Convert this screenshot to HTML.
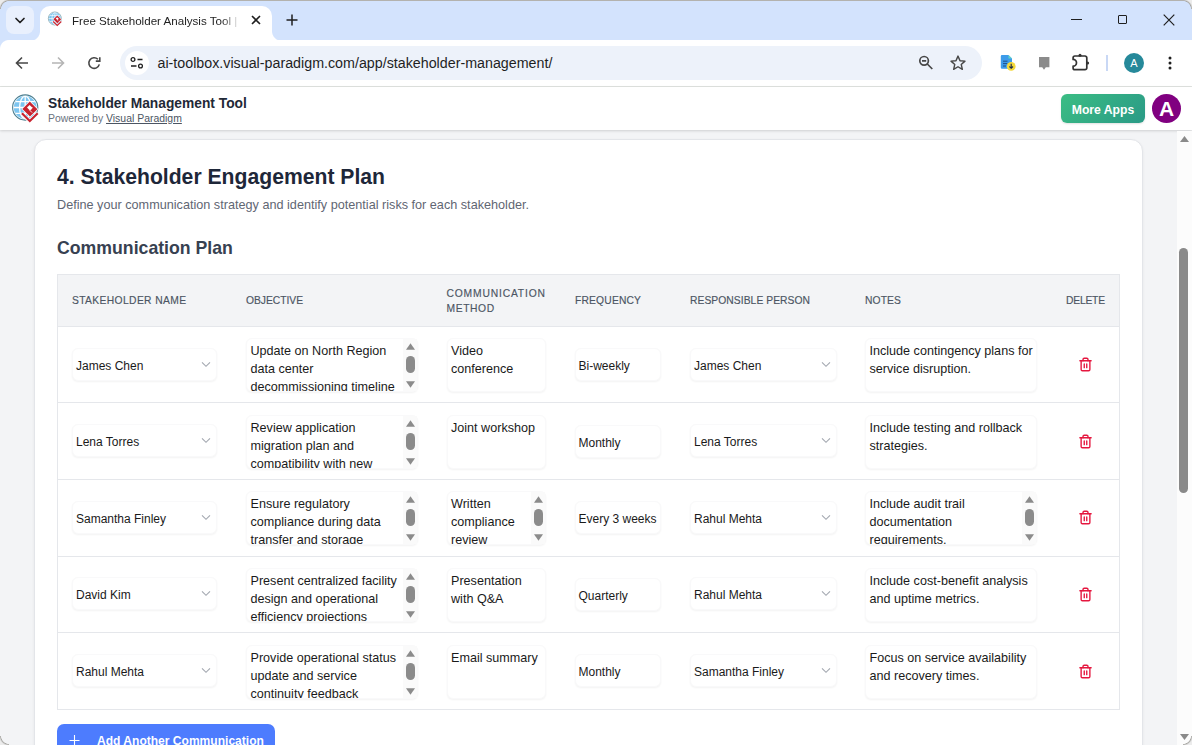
<!DOCTYPE html>
<html><head><meta charset="utf-8"><title>Stakeholder Management Tool</title><style>
*{margin:0;padding:0;box-sizing:border-box}
html,body{width:1192px;height:745px;overflow:hidden;background:#fff}
body{position:relative;font-family:"Liberation Sans",sans-serif}
.abs,.t,.box,.clip{position:absolute}
.t{white-space:nowrap}
.clip{overflow:hidden}
#tabstrip{position:absolute;left:0;top:0;width:1192px;height:40px;background:#d3e3fd;border-top-left-radius:8px;border-top-right-radius:8px}
#winline{position:absolute;left:0;top:0;width:1192px;height:1px;background:#b3b2ae}
#tabdd{position:absolute;left:6px;top:6px;width:28px;height:28px;border-radius:8px;background:#e9f0fd}
#tab{position:absolute;left:40px;top:6px;width:232px;height:35px;background:#fff;border-radius:10px 10px 0 0}
.flare{position:absolute;bottom:0;width:10px;height:10px}
.fl{left:-10px;background:radial-gradient(circle at 0 0,transparent 9.5px,#fff 10.5px)}
.fr{right:-10px;background:radial-gradient(circle at 100% 0,transparent 9.5px,#fff 10.5px)}
#toolbar{position:absolute;left:0;top:40px;width:1192px;height:46px;background:#fff}
#omni{position:absolute;left:120px;top:46px;width:862px;height:34px;border-radius:17px;background:#edf2fa}
#pagebg{position:absolute;left:0;top:87px;width:1192px;height:658px;background:#f3f4f6}
#page > *{}
#appbar{position:absolute;left:0;top:87px;width:1192px;height:43px;background:#fff;box-shadow:0 1px 3px rgba(0,0,0,.10),0 1px 2px rgba(0,0,0,.06)}
#moreapps{position:absolute;left:1061px;top:94px;width:84px;height:29px;border-radius:6px;background:linear-gradient(135deg,#3bbd84,#2a9a86);color:#fff;font-weight:700;font-size:12.2px;line-height:29px;padding-top:2px;text-align:center;box-shadow:0 1px 2px rgba(0,0,0,.12)}
#avatar{position:absolute;left:1152px;top:94px;width:29px;height:29px;border-radius:50%;background:#800080;color:#fff;font-weight:700;font-size:21px;line-height:30px;text-align:center}
#vscroll{position:absolute;left:1177px;top:131px;width:15px;height:614px;background:#fcfcfc}
#vthumb{position:absolute;left:2px;top:117px;width:9px;height:245px;border-radius:4.5px;background:#8a8a8a}
#card{position:absolute;left:34px;top:139px;width:1109px;height:700px;background:#fff;border:1px solid #e3e5e9;border-radius:12px;box-shadow:0 1px 3px rgba(0,0,0,.06)}
#table{position:absolute;left:57px;top:274px;width:1063px;height:436px;border:1px solid #e5e7eb;background:#fff}
#thead{position:absolute;left:58px;top:275px;width:1061px;height:52px;background:#f3f4f6;border-bottom:1px solid #e5e7eb}
.box{border:1px solid #f9f9fa;border-radius:6px;background:#fff;box-shadow:0 1px 2px rgba(0,0,0,.05)}
#addbtn{position:absolute;left:57px;top:724px;width:218px;height:40px;border-radius:7px;background:#4d7cfe}
</style></head><body>
<div id="tabstrip"></div>
<div id="winline"></div>
<div id="tabdd"><svg width="28" height="28" viewBox="0 0 28 28"><path d="M10 12.5l4 4 4-4" fill="none" stroke="#1f1f1f" stroke-width="1.7" stroke-linecap="round" stroke-linejoin="round"/></svg></div>
<div id="tab"><div class="flare fl"></div><div class="flare fr"></div></div>
<svg class="abs" style="left:47px;top:11px" width="15.5" height="15.5" viewBox="0 0 30 30"><defs><clipPath id="gc1"><circle cx="15.2" cy="14.5" r="11.4"/></clipPath></defs>
<circle cx="15.2" cy="14.5" r="12.6" fill="#fff" stroke="#4d7f90" stroke-width="1.1"/>
<g clip-path="url(#gc1)"><rect x="0" y="0" width="30" height="30" fill="#7cc5f0"/>
<path d="M0 14.5h30M0 8.6h30M0 20.4h30M15.2 0v30" stroke="#fff" stroke-width="1.3"/>
<ellipse cx="15.2" cy="14.5" rx="5.6" ry="11.4" fill="none" stroke="#fff" stroke-width="1.3"/></g>
<path d="M11.6 20.3l8.2 8 8.1-8" fill="none" stroke="#fff" stroke-width="3.6"/>
<path d="M11.9 20.3l7.9 7.7 7.9-7.7" fill="none" stroke="#c8232f" stroke-width="2.2"/>
<path d="M19.8 7.6l8.6 8.6-8.4 8.4-8.6-8.6z" fill="#fff"/>
<path d="M19.8 8.6l7.6 7.6-7.4 7.4-7.6-7.6z" fill="#c8232f"/>
<path d="M19.6 11.9l2.9 2.9-2.6 2.6-2.9-2.9z" fill="#fff"/>
<path d="M22.5 14.8l-2.6 2.6 2.2 2.2" fill="none" stroke="#fff" stroke-width="0.9"/></svg>
<div class="t " style="left:72.00px;top:14.23px;font-size:11.6px;line-height:14.5px;color:#1f1f1f;font-weight:400;width:172px;overflow:hidden;white-space:nowrap;-webkit-mask-image:linear-gradient(90deg,#000 150px,transparent 168px);">Free Stakeholder Analysis Tool | Visual Paradigm</div>
<svg class="abs" style="left:250.4px;top:14px" width="12" height="12" viewBox="0 0 12 12"><path d="M2 2l8 8M10 2l-8 8" stroke="#1f1f1f" stroke-width="1.6"/></svg>
<svg class="abs" style="left:285px;top:13px" width="14" height="14" viewBox="0 0 14 14"><path d="M7 1.5v11M1.5 7h11" stroke="#1f1f1f" stroke-width="1.5"/></svg>
<div class="abs" style="left:1071px;top:19px;width:11px;height:1px;background:#1f1f1f"></div>
<div class="abs" style="left:1117.5px;top:15px;width:9px;height:9px;border:1.2px solid #1f1f1f;border-radius:1px"></div>
<svg class="abs" style="left:1163px;top:14px" width="12" height="12" viewBox="0 0 12 12"><path d="M0.7 0.7l10.6 10.6M11.3 0.7L0.7 11.3" stroke="#1f1f1f" stroke-width="1.2"/></svg>
<div id="toolbar"></div>
<div class="abs" style="left:0;top:40px;width:9px;height:9px;background:radial-gradient(circle at 100% 100%,transparent 8.5px,#d3e3fd 9.5px)"></div>
<svg class="abs" style="left:14px;top:55px" width="16" height="16" viewBox="0 0 16 16"><path d="M14 8H3M8 2.5L2.5 8 8 13.5" fill="none" stroke="#474747" stroke-width="1.6"/></svg>
<svg class="abs" style="left:50px;top:55px" width="16" height="16" viewBox="0 0 16 16"><path d="M2 8h11M8 2.5L13.5 8 8 13.5" fill="none" stroke="#b5b5b5" stroke-width="1.6"/></svg>
<svg class="abs" style="left:86px;top:55px" width="16" height="16" viewBox="0 0 16 16"><path d="M11.9 4.3A5.3 5.3 0 1 0 13.3 9.4" fill="none" stroke="#474747" stroke-width="1.6"/><path d="M13.8 2.3V6.1H9.8" fill="none" stroke="#474747" stroke-width="1.6"/></svg>
<div id="omni"></div>
<div class="abs" style="left:125px;top:51px;width:24px;height:24px;border-radius:12px;background:#fff"></div>
<svg class="abs" style="left:129px;top:55px" width="16" height="16" viewBox="0 0 16 16"><circle cx="4" cy="4.5" r="1.9" fill="none" stroke="#1f1f1f" stroke-width="1.3"/><path d="M8.5 4.5h5M2 11h5.5" stroke="#1f1f1f" stroke-width="1.3"/><circle cx="11.5" cy="11" r="1.9" fill="none" stroke="#1f1f1f" stroke-width="1.3"/></svg>
<div class="t " style="left:157.50px;top:54.74px;font-size:14.27px;line-height:17.84px;color:#1f1f1f;font-weight:400;white-space:nowrap;">ai-toolbox.visual-paradigm.com/app/stakeholder-management/</div>
<svg class="abs" style="left:917px;top:55px" width="18" height="18" viewBox="0 0 18 18"><circle cx="7.1" cy="5.8" r="4.3" fill="none" stroke="#474747" stroke-width="1.7"/><path d="M5 5.8h4.2M10.3 9l5 5" stroke="#474747" stroke-width="1.7"/></svg>
<svg class="abs" style="left:949px;top:54px" width="18" height="18" viewBox="0 0 24 24"><path d="M12 2.8l2.7 6.1 6.6.6-5 4.4 1.5 6.5L12 17l-5.8 3.4 1.5-6.5-5-4.4 6.6-.6z" fill="none" stroke="#474747" stroke-width="1.9" stroke-linejoin="round"/></svg>
<svg class="abs" style="left:998px;top:53px" width="20" height="20" viewBox="0 0 20 20"><path d="M4 2h6.5l3.5 3.5V14.5a1.2 1.2 0 0 1-1.2 1.2H4a1.2 1.2 0 0 1-1.2-1.2V3.2A1.2 1.2 0 0 1 4 2z" fill="#3d9be9"/><path d="M10.5 2v3.5H14z" fill="#5fd6c8"/><path d="M5 8.2h4.5M5 10.6h4.5M5 13h3" stroke="#1d4f8a" stroke-width="1"/><circle cx="13.2" cy="13.4" r="4.4" fill="#f4d83a"/><path d="M13.2 10.8v4.4M11.4 13.5l1.8 1.8 1.8-1.8" fill="none" stroke="#1d2b4a" stroke-width="1.1"/></svg>
<svg class="abs" style="left:1036px;top:55px" width="16" height="16" viewBox="0 0 16 16"><path d="M3 2h10.4v10.2H9.8L8 14.7 6.2 12.2H3z" fill="#8b8b8b"/></svg>
<svg class="abs" style="left:1071px;top:52px" width="20" height="20" viewBox="0 0 20 20"><path d="M3.9 4H14a1.8 1.8 0 0 1 1.8 1.8V15.9a1.8 1.8 0 0 1-1.8 1.8H3.9a1.8 1.8 0 0 1-1.8-1.8V14.2A3.4 3.4 0 0 0 2.1 7.4V5.8A1.8 1.8 0 0 1 3.9 4z" fill="none" stroke="#333" stroke-width="1.7" stroke-linejoin="round"/><circle cx="9" cy="3.3" r="1.5" fill="#333"/><circle cx="16.6" cy="11" r="1.5" fill="#333"/></svg>
<div class="abs" style="left:1106px;top:55px;width:2px;height:16px;background:#c9d8f5"></div>
<div class="abs" style="left:1124px;top:53px;width:20px;height:20px;border-radius:10px;background:#26899a;color:#fff;font-size:11px;line-height:20px;text-align:center;font-family:'Liberation Sans',sans-serif">A</div>
<svg class="abs" style="left:1162px;top:55px" width="16" height="16" viewBox="0 0 16 16"><circle cx="8" cy="3" r="1.5" fill="#1f1f1f"/><circle cx="8" cy="8" r="1.5" fill="#1f1f1f"/><circle cx="8" cy="13" r="1.5" fill="#1f1f1f"/></svg>
<div class="abs" style="left:0;top:86px;width:1192px;height:1px;background:#e0e3e0"></div>
<div id="pagebg"></div><div>
<div id="appbar"></div>
<svg class="abs" style="left:10px;top:93px" width="30" height="30" viewBox="0 0 30 30"><defs><clipPath id="gc2"><circle cx="15.2" cy="14.5" r="11.4"/></clipPath></defs>
<circle cx="15.2" cy="14.5" r="12.6" fill="#fff" stroke="#4d7f90" stroke-width="1.1"/>
<g clip-path="url(#gc2)"><rect x="0" y="0" width="30" height="30" fill="#7cc5f0"/>
<path d="M0 14.5h30M0 8.6h30M0 20.4h30M15.2 0v30" stroke="#fff" stroke-width="1.3"/>
<ellipse cx="15.2" cy="14.5" rx="5.6" ry="11.4" fill="none" stroke="#fff" stroke-width="1.3"/></g>
<path d="M11.6 20.3l8.2 8 8.1-8" fill="none" stroke="#fff" stroke-width="3.6"/>
<path d="M11.9 20.3l7.9 7.7 7.9-7.7" fill="none" stroke="#c8232f" stroke-width="2.2"/>
<path d="M19.8 7.6l8.6 8.6-8.4 8.4-8.6-8.6z" fill="#fff"/>
<path d="M19.8 8.6l7.6 7.6-7.4 7.4-7.6-7.6z" fill="#c8232f"/>
<path d="M19.6 11.9l2.9 2.9-2.6 2.6-2.9-2.9z" fill="#fff"/>
<path d="M22.5 14.8l-2.6 2.6 2.2 2.2" fill="none" stroke="#fff" stroke-width="0.9"/></svg>
<div class="t " style="left:48.00px;top:95.20px;font-size:13.79px;line-height:17.24px;color:#1f2937;font-weight:700;white-space:nowrap;">Stakeholder Management Tool</div>
<div class="t " style="left:48.00px;top:111.65px;font-size:10.45px;line-height:13.06px;color:#6b7280;font-weight:400;white-space:nowrap;">Powered by <span style="text-decoration:underline;color:#4b5563">Visual Paradigm</span></div>
<div id="moreapps">More Apps</div>
<div id="avatar">A</div>
<div id="vscroll"><div id="vthumb"></div></div>
<svg class="abs" style="left:1179px;top:135px" width="11" height="8" viewBox="0 0 11 8"><path d="M5.5 1L10 7H1z" fill="#8a8a8a"/></svg>
<svg class="abs" style="left:1179px;top:733px" width="11" height="8" viewBox="0 0 11 8"><path d="M5.5 7L10 1H1z" fill="#8a8a8a"/></svg>
<div id="card"></div>
<div class="t " style="left:57.00px;top:163.84px;font-size:21.16px;line-height:26.45px;color:#1e2739;font-weight:700;white-space:nowrap;">4. Stakeholder Engagement Plan</div>
<div class="t " style="left:57.00px;top:198.40px;font-size:12.66px;line-height:15.82px;color:#5f6673;font-weight:400;white-space:nowrap;">Define your communication strategy and identify potential risks for each stakeholder.</div>
<div class="t " style="left:57.00px;top:237.21px;font-size:17.7px;line-height:22.12px;color:#374151;font-weight:700;white-space:nowrap;">Communication Plan</div>
<div id="table"></div>
<div id="thead"></div>
<div class="t " style="left:72.00px;top:295.09px;font-size:10.3px;line-height:12.88px;color:#4b5563;font-weight:400;letter-spacing:0.365px;-webkit-text-stroke:0.15px #4b5563;">STAKEHOLDER NAME</div>
<div class="t " style="left:246.00px;top:295.09px;font-size:10.3px;line-height:12.88px;color:#4b5563;font-weight:400;letter-spacing:-0.027px;-webkit-text-stroke:0.15px #4b5563;">OBJECTIVE</div>
<div class="t " style="left:446.50px;top:287.89px;font-size:10.3px;line-height:12.88px;color:#4b5563;font-weight:400;letter-spacing:0.828px;-webkit-text-stroke:0.15px #4b5563;">COMMUNICATION</div>
<div class="t " style="left:446.50px;top:302.69px;font-size:10.3px;line-height:12.88px;color:#4b5563;font-weight:400;letter-spacing:0.595px;-webkit-text-stroke:0.15px #4b5563;">METHOD</div>
<div class="t " style="left:575.00px;top:295.09px;font-size:10.3px;line-height:12.88px;color:#4b5563;font-weight:400;letter-spacing:0.168px;-webkit-text-stroke:0.15px #4b5563;">FREQUENCY</div>
<div class="t " style="left:690.00px;top:295.09px;font-size:10.3px;line-height:12.88px;color:#4b5563;font-weight:400;letter-spacing:0.057px;-webkit-text-stroke:0.15px #4b5563;">RESPONSIBLE PERSON</div>
<div class="t " style="left:865.00px;top:295.09px;font-size:10.3px;line-height:12.88px;color:#4b5563;font-weight:400;letter-spacing:0.129px;-webkit-text-stroke:0.15px #4b5563;">NOTES</div>
<div class="t " style="left:1066.00px;top:295.09px;font-size:10.3px;line-height:12.88px;color:#4b5563;font-weight:400;letter-spacing:-0.212px;-webkit-text-stroke:0.15px #4b5563;">DELETE</div>
<div class="box" style="left:71.5px;top:347.70px;width:145.50px;height:33.30px"></div>
<div class="t " style="left:76.00px;top:359.24px;font-size:12.0px;line-height:15.0px;color:#1a1a1a;font-weight:400;">James Chen</div>
<svg class="abs" style="left:201.00px;top:360.50px" width="10" height="7" viewBox="0 0 10 7"><path d="M1 1.3l4 4 4-4" fill="none" stroke="#a3a8b0" stroke-width="1.1"/></svg>
<div class="box" style="left:246px;top:338.00px;width:172.00px;height:53.50px"></div><div class="clip" style="left:247px;top:339.00px;width:170.00px;height:51.50px"><div style="position:absolute;left:-1px;top:-1px"><div class="t " style="left:4.50px;top:5.56px;font-size:12.6px;line-height:15.75px;color:#1a1a1a;font-weight:400;white-space:nowrap;">Update on North Region</div><div class="t " style="left:4.50px;top:23.56px;font-size:12.6px;line-height:15.75px;color:#1a1a1a;font-weight:400;white-space:nowrap;">data center</div><div class="t " style="left:4.50px;top:41.56px;font-size:12.6px;line-height:15.75px;color:#1a1a1a;font-weight:400;white-space:nowrap;">decommissioning timeline</div></div></div><div class="abs" style="left:403.00px;top:339.00px;width:14px;height:51.50px;background:#fafafa"></div><svg class="abs" style="left:406.00px;top:343.00px" width="9" height="7" viewBox="0 0 9 7"><path d="M4.5 0.3L9 6.8H0z" fill="#8b8b8b"/></svg><div class="abs" style="left:406.00px;top:356.00px;width:9px;height:17px;border-radius:4.5px;background:#8b8b8b"></div><svg class="abs" style="left:406.00px;top:381.00px" width="9" height="7" viewBox="0 0 9 7"><path d="M4.5 6.7L9 0.2H0z" fill="#8b8b8b"/></svg>
<div class="box" style="left:446.5px;top:338.00px;width:99.50px;height:54.00px"></div><div class="clip" style="left:447.5px;top:339.00px;width:97.50px;height:52.00px"><div style="position:absolute;left:-1px;top:-1px"><div class="t " style="left:4.50px;top:5.56px;font-size:12.6px;line-height:15.75px;color:#1a1a1a;font-weight:400;white-space:nowrap;">Video</div><div class="t " style="left:4.50px;top:23.56px;font-size:12.6px;line-height:15.75px;color:#1a1a1a;font-weight:400;white-space:nowrap;">conference</div></div></div>
<div class="box" style="left:574.5px;top:347.70px;width:86.50px;height:33.30px"></div>
<div class="t " style="left:578.50px;top:359.24px;font-size:12.0px;line-height:15.0px;color:#1a1a1a;font-weight:400;">Bi-weekly</div>
<div class="box" style="left:690px;top:347.70px;width:147.00px;height:33.30px"></div>
<div class="t " style="left:694.00px;top:359.24px;font-size:12.0px;line-height:15.0px;color:#1a1a1a;font-weight:400;">James Chen</div>
<svg class="abs" style="left:821.00px;top:360.50px" width="10" height="7" viewBox="0 0 10 7"><path d="M1 1.3l4 4 4-4" fill="none" stroke="#a3a8b0" stroke-width="1.1"/></svg>
<div class="box" style="left:865px;top:338.00px;width:172.00px;height:54.00px"></div><div class="clip" style="left:866px;top:339.00px;width:170.00px;height:52.00px"><div style="position:absolute;left:-1px;top:-1px"><div class="t " style="left:4.50px;top:5.56px;font-size:12.6px;line-height:15.75px;color:#1a1a1a;font-weight:400;white-space:nowrap;">Include contingency plans for</div><div class="t " style="left:4.50px;top:23.56px;font-size:12.6px;line-height:15.75px;color:#1a1a1a;font-weight:400;white-space:nowrap;">service disruption.</div></div></div>
<svg class="abs" style="left:1077.6px;top:356.90px" width="15" height="15" viewBox="0 0 24 24" fill="none" stroke="#e5173f" stroke-width="2.2" stroke-linecap="round" stroke-linejoin="round"><path d="M3 6h18"/><path d="M19 6v14c0 1-1 2-2 2H7c-1 0-2-1-2-2V6"/><path d="M8 6V4c0-1 1-2 2-2h4c1 0 2 1 2 2v2"/><line x1="10" y1="11" x2="10" y2="17"/><line x1="14" y1="11" x2="14" y2="17"/></svg>
<div class="abs" style="left:58px;top:402px;width:1061px;height:1px;background:#e5e7eb"></div>
<div class="box" style="left:71.5px;top:423.70px;width:145.50px;height:33.30px"></div>
<div class="t " style="left:76.00px;top:435.24px;font-size:12.0px;line-height:15.0px;color:#1a1a1a;font-weight:400;">Lena Torres</div>
<svg class="abs" style="left:201.00px;top:436.50px" width="10" height="7" viewBox="0 0 10 7"><path d="M1 1.3l4 4 4-4" fill="none" stroke="#a3a8b0" stroke-width="1.1"/></svg>
<div class="box" style="left:246px;top:415.00px;width:172.00px;height:53.50px"></div><div class="clip" style="left:247px;top:416.00px;width:170.00px;height:51.50px"><div style="position:absolute;left:-1px;top:-1px"><div class="t " style="left:4.50px;top:5.56px;font-size:12.6px;line-height:15.75px;color:#1a1a1a;font-weight:400;white-space:nowrap;">Review application</div><div class="t " style="left:4.50px;top:23.56px;font-size:12.6px;line-height:15.75px;color:#1a1a1a;font-weight:400;white-space:nowrap;">migration plan and</div><div class="t " style="left:4.50px;top:41.56px;font-size:12.6px;line-height:15.75px;color:#1a1a1a;font-weight:400;white-space:nowrap;">compatibility with new</div></div></div><div class="abs" style="left:403.00px;top:416.00px;width:14px;height:51.50px;background:#fafafa"></div><svg class="abs" style="left:406.00px;top:420.00px" width="9" height="7" viewBox="0 0 9 7"><path d="M4.5 0.3L9 6.8H0z" fill="#8b8b8b"/></svg><div class="abs" style="left:406.00px;top:433.00px;width:9px;height:17px;border-radius:4.5px;background:#8b8b8b"></div><svg class="abs" style="left:406.00px;top:458.00px" width="9" height="7" viewBox="0 0 9 7"><path d="M4.5 6.7L9 0.2H0z" fill="#8b8b8b"/></svg>
<div class="box" style="left:446.5px;top:415.00px;width:99.50px;height:54.00px"></div><div class="clip" style="left:447.5px;top:416.00px;width:97.50px;height:52.00px"><div style="position:absolute;left:-1px;top:-1px"><div class="t " style="left:4.50px;top:5.56px;font-size:12.6px;line-height:15.75px;color:#1a1a1a;font-weight:400;white-space:nowrap;">Joint workshop</div></div></div>
<div class="box" style="left:574.5px;top:424.70px;width:86.50px;height:33.30px"></div>
<div class="t " style="left:578.50px;top:436.24px;font-size:12.0px;line-height:15.0px;color:#1a1a1a;font-weight:400;">Monthly</div>
<div class="box" style="left:690px;top:423.70px;width:147.00px;height:33.30px"></div>
<div class="t " style="left:694.00px;top:435.24px;font-size:12.0px;line-height:15.0px;color:#1a1a1a;font-weight:400;">Lena Torres</div>
<svg class="abs" style="left:821.00px;top:436.50px" width="10" height="7" viewBox="0 0 10 7"><path d="M1 1.3l4 4 4-4" fill="none" stroke="#a3a8b0" stroke-width="1.1"/></svg>
<div class="box" style="left:865px;top:415.00px;width:172.00px;height:54.00px"></div><div class="clip" style="left:866px;top:416.00px;width:170.00px;height:52.00px"><div style="position:absolute;left:-1px;top:-1px"><div class="t " style="left:4.50px;top:5.56px;font-size:12.6px;line-height:15.75px;color:#1a1a1a;font-weight:400;white-space:nowrap;">Include testing and rollback</div><div class="t " style="left:4.50px;top:23.56px;font-size:12.6px;line-height:15.75px;color:#1a1a1a;font-weight:400;white-space:nowrap;">strategies.</div></div></div>
<svg class="abs" style="left:1077.6px;top:433.90px" width="15" height="15" viewBox="0 0 24 24" fill="none" stroke="#e5173f" stroke-width="2.2" stroke-linecap="round" stroke-linejoin="round"><path d="M3 6h18"/><path d="M19 6v14c0 1-1 2-2 2H7c-1 0-2-1-2-2V6"/><path d="M8 6V4c0-1 1-2 2-2h4c1 0 2 1 2 2v2"/><line x1="10" y1="11" x2="10" y2="17"/><line x1="14" y1="11" x2="14" y2="17"/></svg>
<div class="abs" style="left:58px;top:479px;width:1061px;height:1px;background:#e5e7eb"></div>
<div class="box" style="left:71.5px;top:500.70px;width:145.50px;height:33.30px"></div>
<div class="t " style="left:76.00px;top:512.24px;font-size:12.0px;line-height:15.0px;color:#1a1a1a;font-weight:400;">Samantha Finley</div>
<svg class="abs" style="left:201.00px;top:513.50px" width="10" height="7" viewBox="0 0 10 7"><path d="M1 1.3l4 4 4-4" fill="none" stroke="#a3a8b0" stroke-width="1.1"/></svg>
<div class="box" style="left:246px;top:491.00px;width:172.00px;height:53.50px"></div><div class="clip" style="left:247px;top:492.00px;width:170.00px;height:51.50px"><div style="position:absolute;left:-1px;top:-1px"><div class="t " style="left:4.50px;top:5.56px;font-size:12.6px;line-height:15.75px;color:#1a1a1a;font-weight:400;white-space:nowrap;">Ensure regulatory</div><div class="t " style="left:4.50px;top:23.56px;font-size:12.6px;line-height:15.75px;color:#1a1a1a;font-weight:400;white-space:nowrap;">compliance during data</div><div class="t " style="left:4.50px;top:41.56px;font-size:12.6px;line-height:15.75px;color:#1a1a1a;font-weight:400;white-space:nowrap;">transfer and storage</div></div></div><div class="abs" style="left:403.00px;top:492.00px;width:14px;height:51.50px;background:#fafafa"></div><svg class="abs" style="left:406.00px;top:496.00px" width="9" height="7" viewBox="0 0 9 7"><path d="M4.5 0.3L9 6.8H0z" fill="#8b8b8b"/></svg><div class="abs" style="left:406.00px;top:509.00px;width:9px;height:17px;border-radius:4.5px;background:#8b8b8b"></div><svg class="abs" style="left:406.00px;top:534.00px" width="9" height="7" viewBox="0 0 9 7"><path d="M4.5 6.7L9 0.2H0z" fill="#8b8b8b"/></svg>
<div class="box" style="left:446.5px;top:491.00px;width:99.50px;height:54.00px"></div><div class="clip" style="left:447.5px;top:492.00px;width:97.50px;height:52.00px"><div style="position:absolute;left:-1px;top:-1px"><div class="t " style="left:4.50px;top:5.56px;font-size:12.6px;line-height:15.75px;color:#1a1a1a;font-weight:400;white-space:nowrap;">Written</div><div class="t " style="left:4.50px;top:23.56px;font-size:12.6px;line-height:15.75px;color:#1a1a1a;font-weight:400;white-space:nowrap;">compliance</div><div class="t " style="left:4.50px;top:41.56px;font-size:12.6px;line-height:15.75px;color:#1a1a1a;font-weight:400;white-space:nowrap;">review</div></div></div><div class="abs" style="left:531.00px;top:492.00px;width:14px;height:52.00px;background:#fafafa"></div><svg class="abs" style="left:534.00px;top:496.00px" width="9" height="7" viewBox="0 0 9 7"><path d="M4.5 0.3L9 6.8H0z" fill="#8b8b8b"/></svg><div class="abs" style="left:534.00px;top:509.00px;width:9px;height:17px;border-radius:4.5px;background:#8b8b8b"></div><svg class="abs" style="left:534.00px;top:534.00px" width="9" height="7" viewBox="0 0 9 7"><path d="M4.5 6.7L9 0.2H0z" fill="#8b8b8b"/></svg>
<div class="box" style="left:574.5px;top:500.70px;width:86.50px;height:33.30px"></div>
<div class="t " style="left:578.50px;top:512.24px;font-size:12.0px;line-height:15.0px;color:#1a1a1a;font-weight:400;">Every 3 weeks</div>
<div class="box" style="left:690px;top:500.70px;width:147.00px;height:33.30px"></div>
<div class="t " style="left:694.00px;top:512.24px;font-size:12.0px;line-height:15.0px;color:#1a1a1a;font-weight:400;">Rahul Mehta</div>
<svg class="abs" style="left:821.00px;top:513.50px" width="10" height="7" viewBox="0 0 10 7"><path d="M1 1.3l4 4 4-4" fill="none" stroke="#a3a8b0" stroke-width="1.1"/></svg>
<div class="box" style="left:865px;top:491.00px;width:172.00px;height:54.00px"></div><div class="clip" style="left:866px;top:492.00px;width:170.00px;height:52.00px"><div style="position:absolute;left:-1px;top:-1px"><div class="t " style="left:4.50px;top:5.56px;font-size:12.6px;line-height:15.75px;color:#1a1a1a;font-weight:400;white-space:nowrap;">Include audit trail</div><div class="t " style="left:4.50px;top:23.56px;font-size:12.6px;line-height:15.75px;color:#1a1a1a;font-weight:400;white-space:nowrap;">documentation</div><div class="t " style="left:4.50px;top:41.56px;font-size:12.6px;line-height:15.75px;color:#1a1a1a;font-weight:400;white-space:nowrap;">requirements.</div></div></div><div class="abs" style="left:1022.00px;top:492.00px;width:14px;height:52.00px;background:#fafafa"></div><svg class="abs" style="left:1025.00px;top:496.00px" width="9" height="7" viewBox="0 0 9 7"><path d="M4.5 0.3L9 6.8H0z" fill="#8b8b8b"/></svg><div class="abs" style="left:1025.00px;top:509.00px;width:9px;height:17px;border-radius:4.5px;background:#8b8b8b"></div><svg class="abs" style="left:1025.00px;top:534.00px" width="9" height="7" viewBox="0 0 9 7"><path d="M4.5 6.7L9 0.2H0z" fill="#8b8b8b"/></svg>
<svg class="abs" style="left:1077.6px;top:509.90px" width="15" height="15" viewBox="0 0 24 24" fill="none" stroke="#e5173f" stroke-width="2.2" stroke-linecap="round" stroke-linejoin="round"><path d="M3 6h18"/><path d="M19 6v14c0 1-1 2-2 2H7c-1 0-2-1-2-2V6"/><path d="M8 6V4c0-1 1-2 2-2h4c1 0 2 1 2 2v2"/><line x1="10" y1="11" x2="10" y2="17"/><line x1="14" y1="11" x2="14" y2="17"/></svg>
<div class="abs" style="left:58px;top:556px;width:1061px;height:1px;background:#e5e7eb"></div>
<div class="box" style="left:71.5px;top:576.70px;width:145.50px;height:33.30px"></div>
<div class="t " style="left:76.00px;top:588.24px;font-size:12.0px;line-height:15.0px;color:#1a1a1a;font-weight:400;">David Kim</div>
<svg class="abs" style="left:201.00px;top:589.50px" width="10" height="7" viewBox="0 0 10 7"><path d="M1 1.3l4 4 4-4" fill="none" stroke="#a3a8b0" stroke-width="1.1"/></svg>
<div class="box" style="left:246px;top:568.00px;width:172.00px;height:53.50px"></div><div class="clip" style="left:247px;top:569.00px;width:170.00px;height:51.50px"><div style="position:absolute;left:-1px;top:-1px"><div class="t " style="left:4.50px;top:5.56px;font-size:12.6px;line-height:15.75px;color:#1a1a1a;font-weight:400;white-space:nowrap;">Present centralized facility</div><div class="t " style="left:4.50px;top:23.56px;font-size:12.6px;line-height:15.75px;color:#1a1a1a;font-weight:400;white-space:nowrap;">design and operational</div><div class="t " style="left:4.50px;top:41.56px;font-size:12.6px;line-height:15.75px;color:#1a1a1a;font-weight:400;white-space:nowrap;">efficiency projections</div></div></div><div class="abs" style="left:403.00px;top:569.00px;width:14px;height:51.50px;background:#fafafa"></div><svg class="abs" style="left:406.00px;top:573.00px" width="9" height="7" viewBox="0 0 9 7"><path d="M4.5 0.3L9 6.8H0z" fill="#8b8b8b"/></svg><div class="abs" style="left:406.00px;top:586.00px;width:9px;height:17px;border-radius:4.5px;background:#8b8b8b"></div><svg class="abs" style="left:406.00px;top:611.00px" width="9" height="7" viewBox="0 0 9 7"><path d="M4.5 6.7L9 0.2H0z" fill="#8b8b8b"/></svg>
<div class="box" style="left:446.5px;top:568.00px;width:99.50px;height:54.00px"></div><div class="clip" style="left:447.5px;top:569.00px;width:97.50px;height:52.00px"><div style="position:absolute;left:-1px;top:-1px"><div class="t " style="left:4.50px;top:5.56px;font-size:12.6px;line-height:15.75px;color:#1a1a1a;font-weight:400;white-space:nowrap;">Presentation</div><div class="t " style="left:4.50px;top:23.56px;font-size:12.6px;line-height:15.75px;color:#1a1a1a;font-weight:400;white-space:nowrap;">with Q&amp;A</div></div></div>
<div class="box" style="left:574.5px;top:577.70px;width:86.50px;height:33.30px"></div>
<div class="t " style="left:578.50px;top:589.24px;font-size:12.0px;line-height:15.0px;color:#1a1a1a;font-weight:400;">Quarterly</div>
<div class="box" style="left:690px;top:576.70px;width:147.00px;height:33.30px"></div>
<div class="t " style="left:694.00px;top:588.24px;font-size:12.0px;line-height:15.0px;color:#1a1a1a;font-weight:400;">Rahul Mehta</div>
<svg class="abs" style="left:821.00px;top:589.50px" width="10" height="7" viewBox="0 0 10 7"><path d="M1 1.3l4 4 4-4" fill="none" stroke="#a3a8b0" stroke-width="1.1"/></svg>
<div class="box" style="left:865px;top:568.00px;width:172.00px;height:54.00px"></div><div class="clip" style="left:866px;top:569.00px;width:170.00px;height:52.00px"><div style="position:absolute;left:-1px;top:-1px"><div class="t " style="left:4.50px;top:5.56px;font-size:12.6px;line-height:15.75px;color:#1a1a1a;font-weight:400;white-space:nowrap;">Include cost-benefit analysis</div><div class="t " style="left:4.50px;top:23.56px;font-size:12.6px;line-height:15.75px;color:#1a1a1a;font-weight:400;white-space:nowrap;">and uptime metrics.</div></div></div>
<svg class="abs" style="left:1077.6px;top:586.90px" width="15" height="15" viewBox="0 0 24 24" fill="none" stroke="#e5173f" stroke-width="2.2" stroke-linecap="round" stroke-linejoin="round"><path d="M3 6h18"/><path d="M19 6v14c0 1-1 2-2 2H7c-1 0-2-1-2-2V6"/><path d="M8 6V4c0-1 1-2 2-2h4c1 0 2 1 2 2v2"/><line x1="10" y1="11" x2="10" y2="17"/><line x1="14" y1="11" x2="14" y2="17"/></svg>
<div class="abs" style="left:58px;top:632px;width:1061px;height:1px;background:#e5e7eb"></div>
<div class="box" style="left:71.5px;top:653.70px;width:145.50px;height:33.30px"></div>
<div class="t " style="left:76.00px;top:665.24px;font-size:12.0px;line-height:15.0px;color:#1a1a1a;font-weight:400;">Rahul Mehta</div>
<svg class="abs" style="left:201.00px;top:666.50px" width="10" height="7" viewBox="0 0 10 7"><path d="M1 1.3l4 4 4-4" fill="none" stroke="#a3a8b0" stroke-width="1.1"/></svg>
<div class="box" style="left:246px;top:645.00px;width:172.00px;height:53.50px"></div><div class="clip" style="left:247px;top:646.00px;width:170.00px;height:51.50px"><div style="position:absolute;left:-1px;top:-1px"><div class="t " style="left:4.50px;top:5.56px;font-size:12.6px;line-height:15.75px;color:#1a1a1a;font-weight:400;white-space:nowrap;">Provide operational status</div><div class="t " style="left:4.50px;top:23.56px;font-size:12.6px;line-height:15.75px;color:#1a1a1a;font-weight:400;white-space:nowrap;">update and service</div><div class="t " style="left:4.50px;top:41.56px;font-size:12.6px;line-height:15.75px;color:#1a1a1a;font-weight:400;white-space:nowrap;">continuity feedback</div></div></div><div class="abs" style="left:403.00px;top:646.00px;width:14px;height:51.50px;background:#fafafa"></div><svg class="abs" style="left:406.00px;top:650.00px" width="9" height="7" viewBox="0 0 9 7"><path d="M4.5 0.3L9 6.8H0z" fill="#8b8b8b"/></svg><div class="abs" style="left:406.00px;top:663.00px;width:9px;height:17px;border-radius:4.5px;background:#8b8b8b"></div><svg class="abs" style="left:406.00px;top:688.00px" width="9" height="7" viewBox="0 0 9 7"><path d="M4.5 6.7L9 0.2H0z" fill="#8b8b8b"/></svg>
<div class="box" style="left:446.5px;top:645.00px;width:99.50px;height:54.00px"></div><div class="clip" style="left:447.5px;top:646.00px;width:97.50px;height:52.00px"><div style="position:absolute;left:-1px;top:-1px"><div class="t " style="left:4.50px;top:5.56px;font-size:12.6px;line-height:15.75px;color:#1a1a1a;font-weight:400;white-space:nowrap;">Email summary</div></div></div>
<div class="box" style="left:574.5px;top:653.70px;width:86.50px;height:33.30px"></div>
<div class="t " style="left:578.50px;top:665.24px;font-size:12.0px;line-height:15.0px;color:#1a1a1a;font-weight:400;">Monthly</div>
<div class="box" style="left:690px;top:653.70px;width:147.00px;height:33.30px"></div>
<div class="t " style="left:694.00px;top:665.24px;font-size:12.0px;line-height:15.0px;color:#1a1a1a;font-weight:400;">Samantha Finley</div>
<svg class="abs" style="left:821.00px;top:666.50px" width="10" height="7" viewBox="0 0 10 7"><path d="M1 1.3l4 4 4-4" fill="none" stroke="#a3a8b0" stroke-width="1.1"/></svg>
<div class="box" style="left:865px;top:645.00px;width:172.00px;height:54.00px"></div><div class="clip" style="left:866px;top:646.00px;width:170.00px;height:52.00px"><div style="position:absolute;left:-1px;top:-1px"><div class="t " style="left:4.50px;top:5.56px;font-size:12.6px;line-height:15.75px;color:#1a1a1a;font-weight:400;white-space:nowrap;">Focus on service availability</div><div class="t " style="left:4.50px;top:23.56px;font-size:12.6px;line-height:15.75px;color:#1a1a1a;font-weight:400;white-space:nowrap;">and recovery times.</div></div></div>
<svg class="abs" style="left:1077.6px;top:663.90px" width="15" height="15" viewBox="0 0 24 24" fill="none" stroke="#e5173f" stroke-width="2.2" stroke-linecap="round" stroke-linejoin="round"><path d="M3 6h18"/><path d="M19 6v14c0 1-1 2-2 2H7c-1 0-2-1-2-2V6"/><path d="M8 6V4c0-1 1-2 2-2h4c1 0 2 1 2 2v2"/><line x1="10" y1="11" x2="10" y2="17"/><line x1="14" y1="11" x2="14" y2="17"/></svg>
<div id="addbtn"></div>
<svg class="abs" style="left:68px;top:734px" width="12" height="12" viewBox="0 0 12 12"><path d="M6.5 1v11M1.5 6.5h10" stroke="#fff" stroke-width="1.1"/></svg>
<div class="t " style="left:97.00px;top:733.88px;font-size:12.06px;line-height:15.08px;color:#fff;font-weight:700;white-space:nowrap;">Add Another Communication</div>
<div class="abs" style="left:0;top:0;width:9px;height:9px;background:radial-gradient(circle at 9px 9px,transparent 7.6px,#a8a7a3 8.3px,#d5d5d5 9.2px,#ececec 10px)"></div>
<div class="abs" style="left:1183px;top:0;width:9px;height:9px;background:radial-gradient(circle at 0 9px,transparent 7.6px,#a8a7a3 8.3px,#d5d5d5 9.2px,#ececec 10px)"></div>
<div class="abs" style="left:0;top:736px;width:9px;height:9px;background:radial-gradient(circle at 9px 0,transparent 7.6px,#a8a7a3 8.3px,#d5d5d5 9.2px,#ececec 10px)"></div>
<div class="abs" style="left:1183px;top:736px;width:9px;height:9px;background:radial-gradient(circle at 0 0,transparent 7.6px,#a8a7a3 8.3px,#d5d5d5 9.2px,#ececec 10px)"></div>
</div>
</body></html>
